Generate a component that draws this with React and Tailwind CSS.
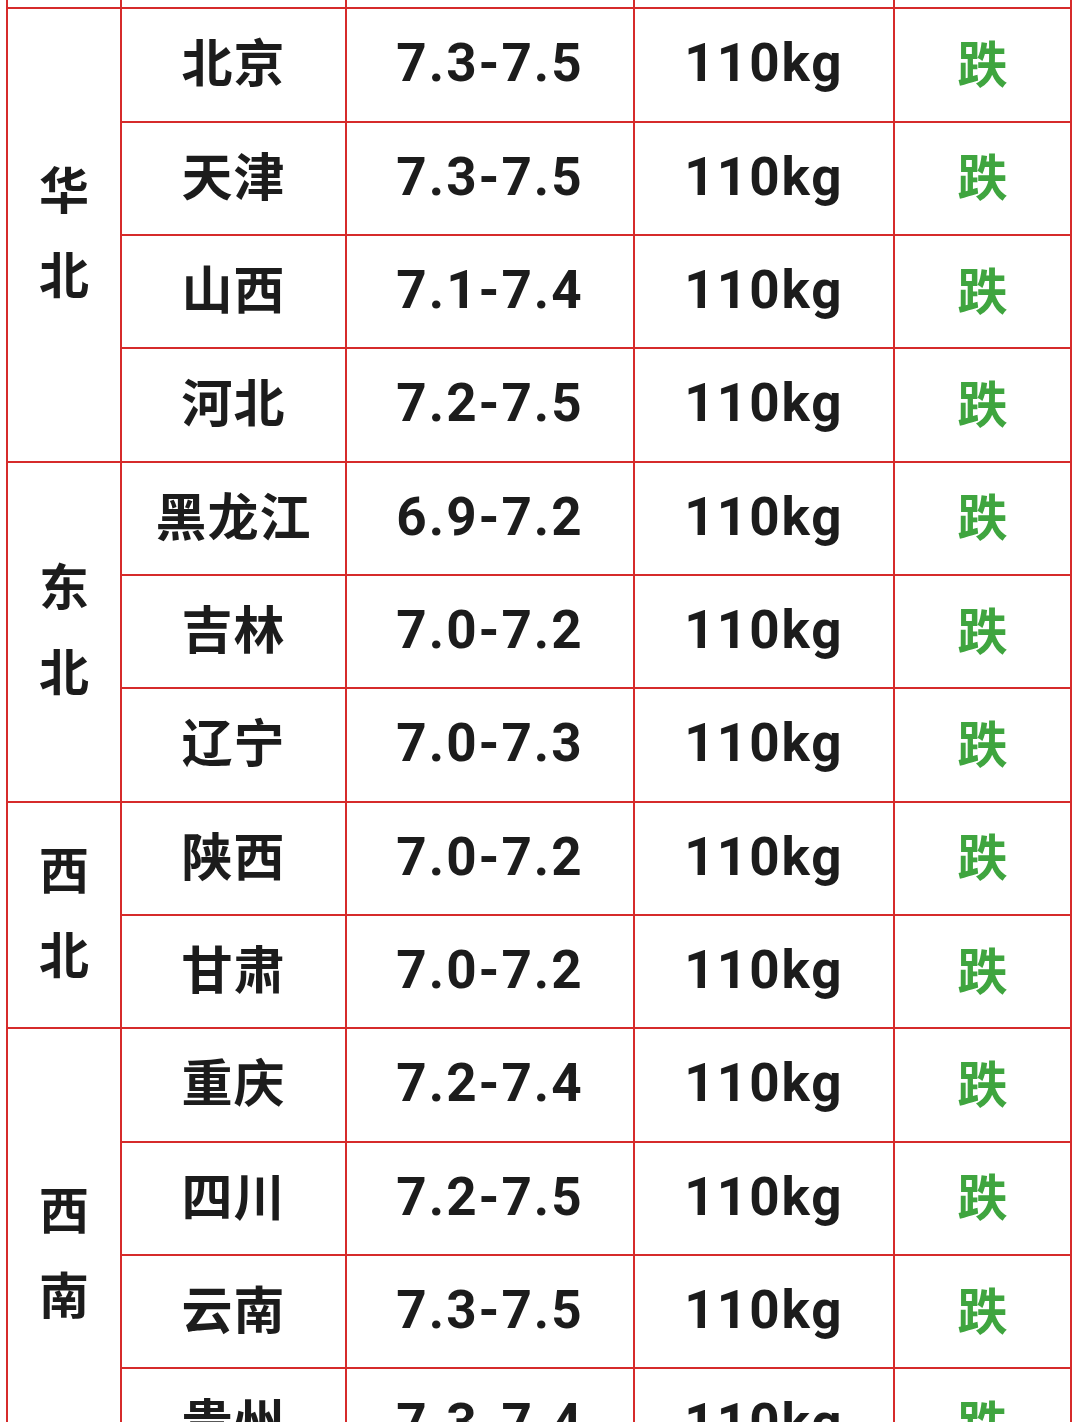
const REGIONS = [
  {
    name: "华北",
    rows: [
      ["北京", "7.3-7.5"],
      ["天津", "7.3-7.5"],
      ["山西", "7.1-7.4"],
      ["河北", "7.2-7.5"],
    ],
  },
  {
    name: "东北",
    rows: [
      ["黑龙江", "6.9-7.2"],
      ["吉林", "7.0-7.2"],
      ["辽宁", "7.0-7.3"],
    ],
  },
  {
    name: "西北",
    rows: [
      ["陕西", "7.0-7.2"],
      ["甘肃", "7.0-7.2"],
    ],
  },
  {
    name: "西南",
    rows: [
      ["重庆", "7.2-7.4"],
      ["四川", "7.2-7.5"],
      ["云南", "7.3-7.5"],
      ["贵州", "7.3-7.4"],
    ],
  },
];

const SPAN = {
  2: "row-span-2",
  3: "row-span-3",
  4: "row-span-4",
};

const cell = "bg-white flex items-center justify-center";
const num = "font-['Roboto','Noto_Sans',sans-serif] text-[53px] font-bold leading-none tracking-[2px]";

export default function App() {
  return (
    <div
      className="w-[1080px] h-[1422px] overflow-hidden bg-white text-[#1c1c1c]"
      style={{ fontFamily: '"Noto Sans CJK SC", "Noto Sans", sans-serif' }}
    >
      <div className="ml-[6px] -mt-[106px] w-[1066px] bg-[#d62b2b] p-[2px] grid grid-cols-[112px_223px_286px_258px_175px] auto-rows-[111.33px] gap-[2px]">
        {/* 上一行（被截掉） */}
        <div className={cell}></div>
        <div className={cell}></div>
        <div className={cell}></div>
        <div className={cell}></div>
        <div className={cell}></div>

        {REGIONS.map((region) =>
          region.rows.map((row, i) => (
            <RowCells key={row[0]} region={region} first={i === 0} name={row[0]} price={row[1]} />
          ))
        )}
      </div>
    </div>
  );
}

function RowCells({ region, first, name, price }) {
  return (
    <>
      {first && (
        <div className={`${cell} ${SPAN[region.rows.length]} flex-col gap-[35px] pb-[10px] text-[50px] font-bold leading-none`}>
          <span>{region.name[0]}</span>
          <span>{region.name[1]}</span>
        </div>
      )}
      <div className={`${cell} pb-[8px] text-[51px] font-bold leading-none tracking-[1px]`}>{name}</div>
      <div className={`${cell} pb-[2px] ${num}`}>{price}</div>
      <div className={`${cell} pb-[2px] ${num}`}>110kg</div>
      <div className={`${cell} pb-[8px] text-[50px] font-bold leading-none text-[#3fa53f]`}>跌</div>
    </>
  );
}
